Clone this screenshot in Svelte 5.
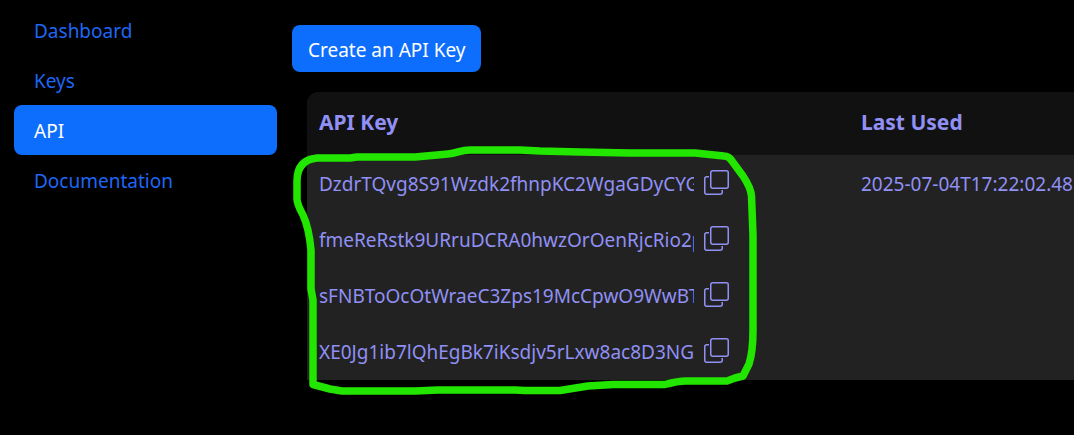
<script>
  const links = ['Dashboard', 'Keys', 'API', 'Documentation'];
  const current = 'API';

  const keys = [
    { value: 'DzdrTQvg8S91Wzdk2fhnpKC2WgaGDyCYGm', lastUsed: '2025-07-04T17:22:02.48' },
    { value: 'fmeReRstk9URruDCRA0hwzOrOenRjcRio2pk', lastUsed: '' },
    { value: 'sFNBToOcOtWraeC3Zps19McCpwO9WwBTx', lastUsed: '' },
    { value: 'XE0Jg1ib7lQhEgBk7iKsdjv5rLxw8ac8D3NG4', lastUsed: '' }
  ];

  function copy(value) {
    navigator.clipboard?.writeText(value);
  }
</script>

<div class="page">
  <nav>
    {#each links as link}
      <a href="#{link.toLowerCase()}" class:active={link === current} aria-current={link === current ? 'page' : undefined}>{link}</a>
    {/each}
  </nav>

  <main>
    <button class="create" type="button">Create an API Key</button>

    <div class="keys">
      <table>
        <thead>
          <tr>
            <th class="key-col" scope="col">API Key</th>
            <th scope="col">Last Used</th>
          </tr>
        </thead>
        <tbody>
          {#each keys as key}
            <tr>
              <td>
                <div class="key">
                  <span class="value">{key.value}</span>
                  <button class="copy" type="button" aria-label="Copy key" onclick={() => copy(key.value)}>
                    <svg viewBox="0 0 25 25" width="25" height="25" fill="none" stroke="currentColor" stroke-width="1.5" aria-hidden="true">
                      <rect x="6.75" y="0.75" width="17.5" height="17.5" rx="2" />
                      <path d="M5 6.75H2.75a2 2 0 0 0-2 2v13.500a2 2 0 0 0 2 2h13.500a2 2 0 0 0 2-2V20" />
                    </svg>
                  </button>
                </div>
              </td>
              <td>{key.lastUsed}</td>
            </tr>
          {/each}
        </tbody>
      </table>
    </div>
  </main>

  <svg class="marker" viewBox="0 0 480 260" width="480" height="260" aria-hidden="true">
    <path d="M37 18H70L77 17H135L168 14C178 13 180 10 190 10H240L260 11L300 12L350 13H415L444 16Q449 16 452 21L463 36Q471 48 471.500 56L473 95V190Q473 212 469 224L463 236L455 238L447 241H406Q398 241 385 244.500H333L308 246L280 250.500H245L235 250H158L135 251H62L50 249L33 244.500V160L31 149V110Q29 88 23 75Q17 64 17 59V41Q17 20 37 18Z" />
  </svg>
</div>

<style>
  :global(body) {
    margin: 0;
    background: #000;
  }

  .page {
    position: relative;
    display: grid;
    grid-template-columns: 263px minmax(0, 1fr);
    gap: 15px;
    padding-left: 14px;
    overflow: hidden;
    font-family: "Noto Sans", "Open Sans", sans-serif;
    font-size: 19px;
    line-height: 30px;
  }

  nav {
    display: flex;
    flex-direction: column;
    padding-top: 5px;
  }

  nav a {
    padding: 11px 20px 9px;
    border-radius: 8px;
    color: #1f66f5;
    text-decoration: none;
  }

  nav a.active {
    background: #0d6efd;
    color: #fff;
  }

  main {
    padding: 25px 0 54px;
  }

  button {
    border: 0;
    font: inherit;
    cursor: pointer;
  }

  .create {
    display: block;
    padding: 10px 15px 7px 16px;
    border-radius: 8px;
    background: #0d6efd;
    color: #fff;
  }

  .keys {
    margin: 20px 0 0 15px;
    padding-bottom: 1px;
    overflow: hidden;
    border-radius: 12px 0 0 0;
    background: #222;
    color: #9090f5;
  }

  table {
    width: 100%;
    min-width: 1084px;
    table-layout: fixed;
    border-collapse: collapse;
  }

  .key-col {
    width: 542px;
    box-sizing: border-box;
  }

  th {
    height: 60px;
    padding: 0 12px 3px;
    background: #111;
    font-size: 21px;
    font-weight: 700;
    text-align: left;
  }

  td {
    height: 54px;
    padding: 2px 12px 0;
    white-space: nowrap;
  }

  .key {
    display: flex;
    align-items: center;
    gap: 10px;
  }

  .value {
    width: 375px;
    overflow: hidden;
  }

  .copy {
    display: flex;
    padding: 0 0 3px;
    background: none;
    color: inherit;
  }

  .marker {
    position: absolute;
    top: 140px;
    left: 280px;
    fill: none;
    stroke: #22e600;
    stroke-width: 7.5;
    stroke-linejoin: round;
    pointer-events: none;
  }
</style>
